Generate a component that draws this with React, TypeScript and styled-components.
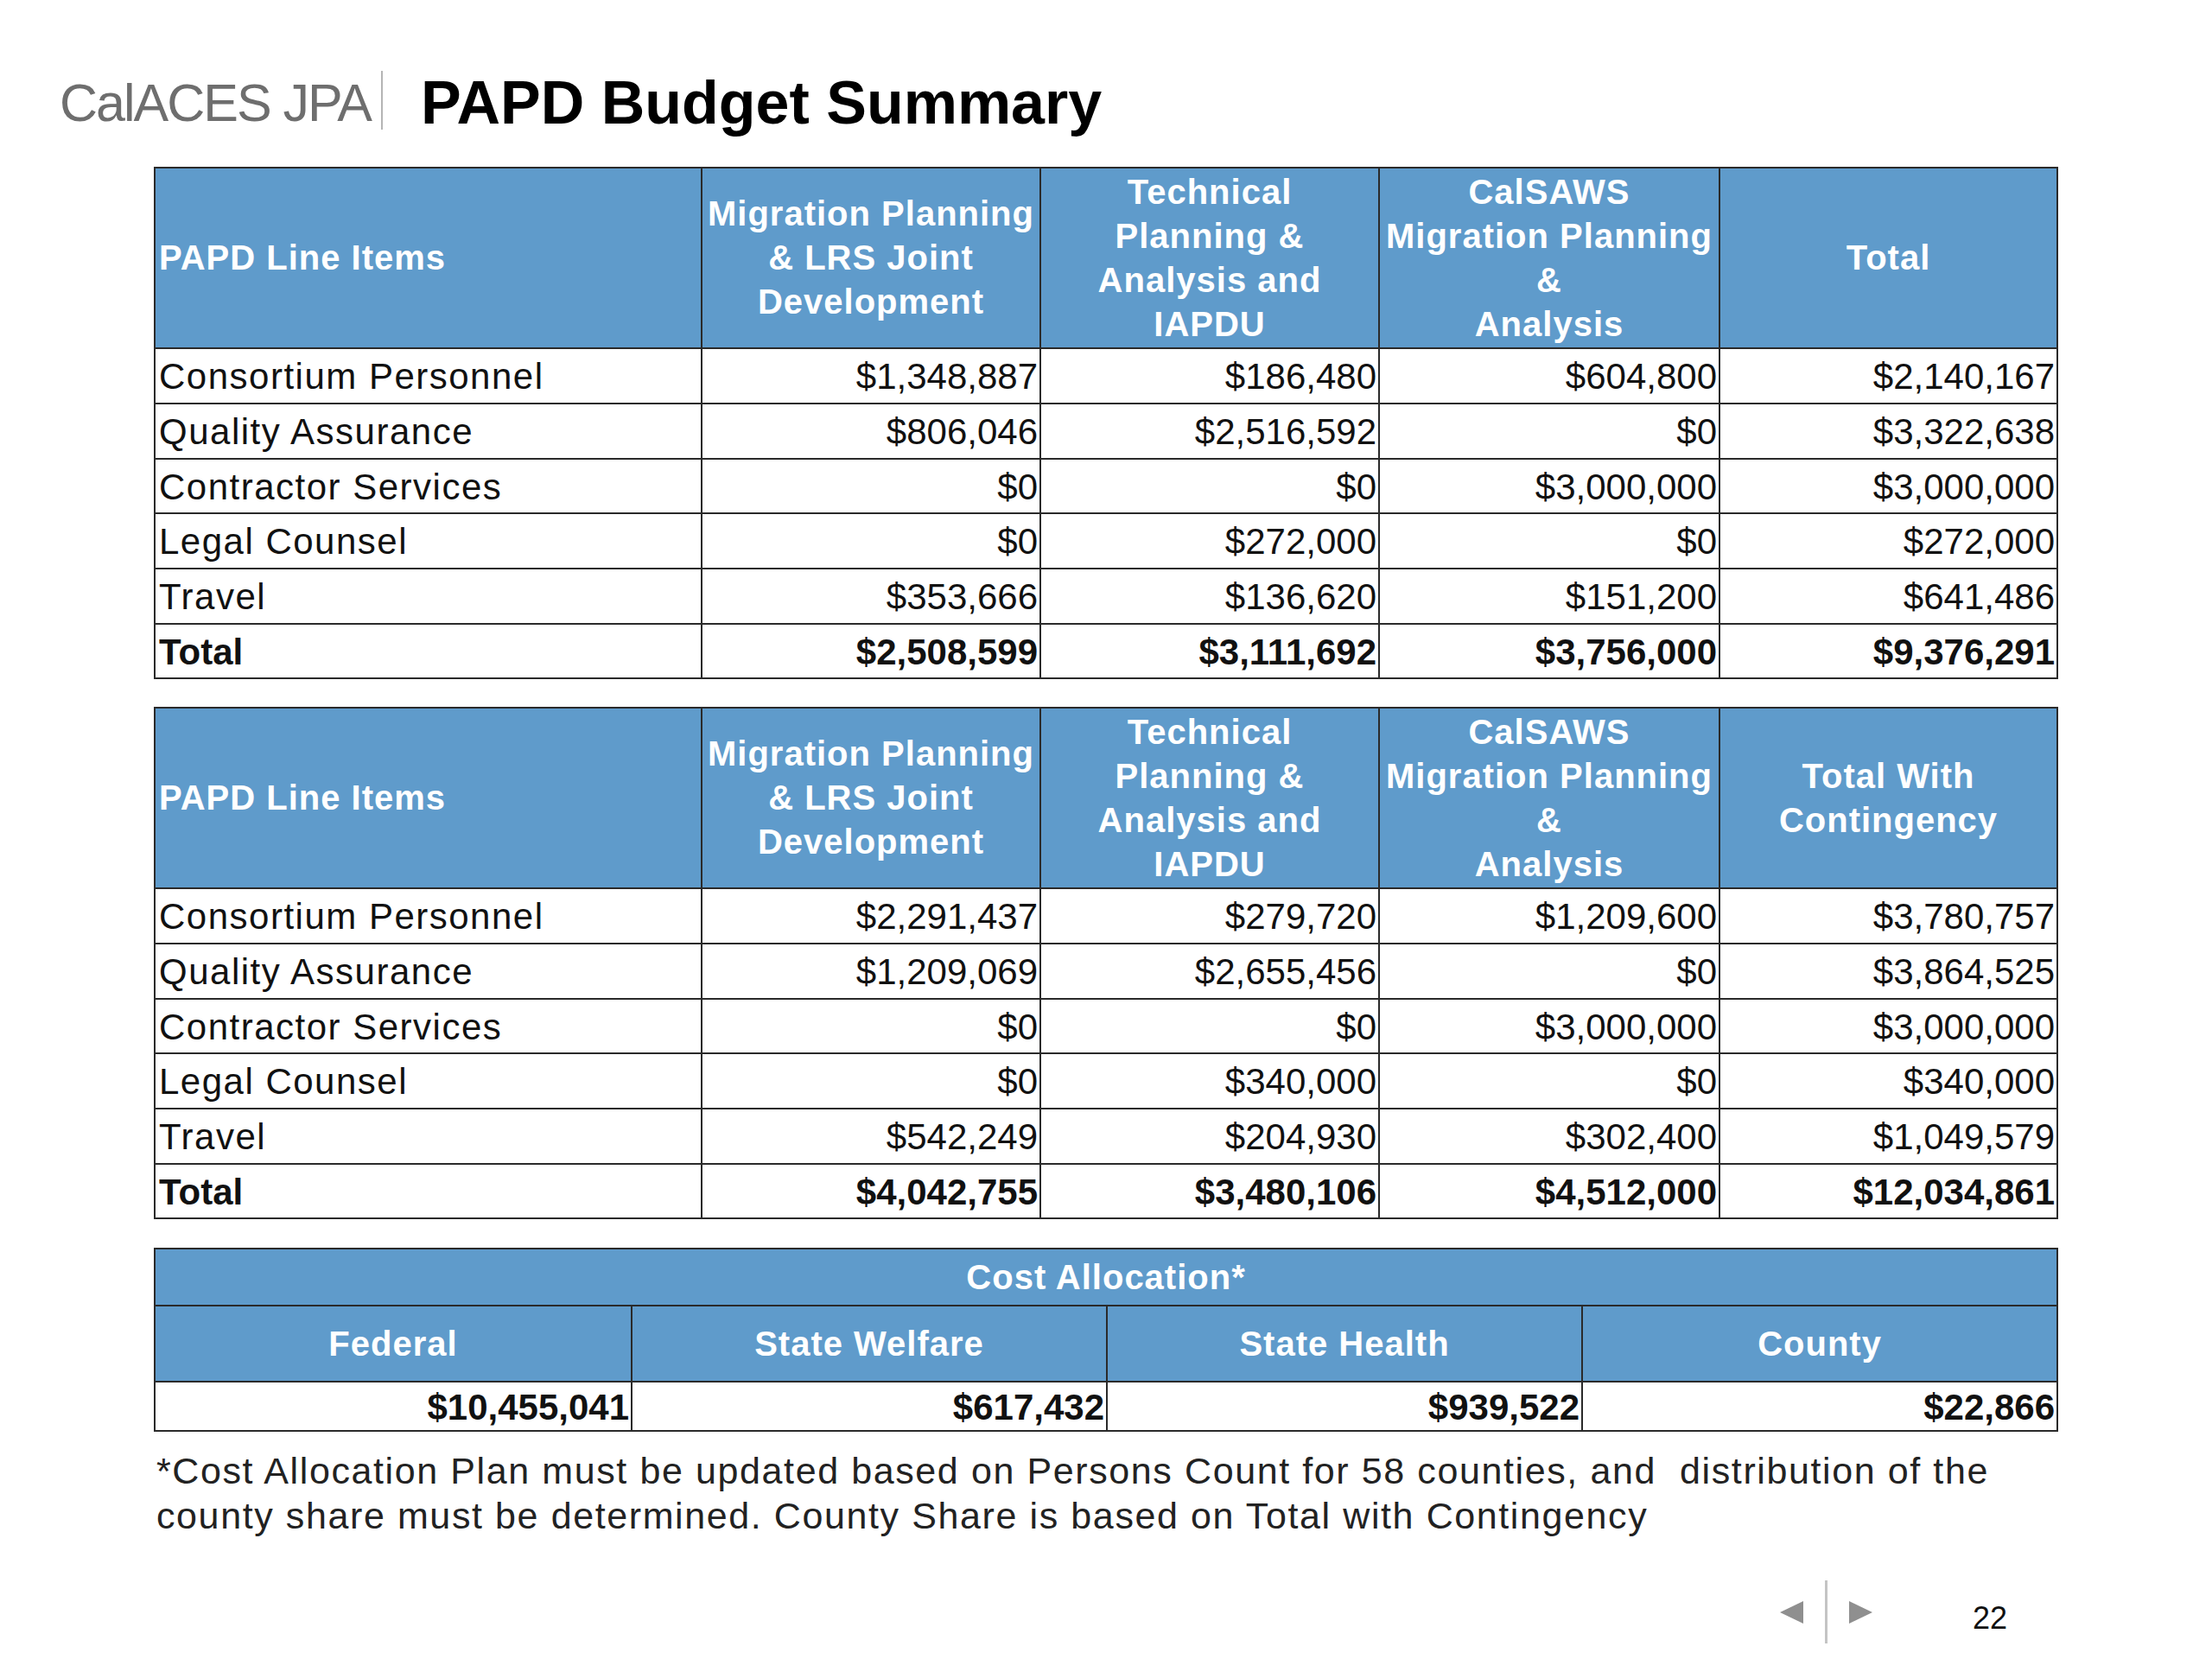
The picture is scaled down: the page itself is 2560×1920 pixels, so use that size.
import React from "react";
import styled, { createGlobalStyle } from "styled-components";

const GlobalStyle = createGlobalStyle`
  html, body { margin: 0; padding: 0; background: #fff; }
  body { font-family: "Liberation Sans", Arial, sans-serif; }
`;

const Slide = styled.div`
  width: 2560px;
  height: 1920px;
  box-sizing: border-box;
  display: flex;
  flex-direction: column;
  background: #fff;
  color: #111;
  font-family: "Liberation Sans", Arial, sans-serif;
  overflow: hidden;
`;

const TitleBar = styled.header`
  display: flex;
  align-items: center;
  height: 68px;
  margin-top: 85px;
  padding-left: 69px;
`;

const Brand = styled.span`
  font-size: 61px;
  letter-spacing: -2px;
  color: #6e6e6e;
  line-height: 1;
`;

const Divider = styled.span`
  width: 2px;
  align-self: stretch;
  background: #b5b5b5;
  margin: -3px 44px 3px 12px;
`;

const Title = styled.h1`
  margin: 0;
  font-size: 70px;
  font-weight: 700;
  color: #000;
  line-height: 1;
`;

const Body = styled.main`
  display: flex;
  flex-direction: column;
  padding-left: 178px;
  margin-top: 40px;
`;

const Grid = styled.table<{ $gap: number }>`
  width: 2202px;
  border-collapse: collapse;
  table-layout: fixed;
  margin-top: ${(p) => p.$gap}px;
`;

const HeadRow = styled.tr<{ $h: number }>`
  height: ${(p) => p.$h}px;
`;

const DataRow = styled.tr<{ $h: number }>`
  height: ${(p) => p.$h}px;
`;

const HeadCell = styled.th<{ $align?: "left" | "center" }>`
  background: #5f9bcb;
  color: #fff;
  font-weight: 700;
  font-size: 40px;
  letter-spacing: 1px;
  line-height: 51px;
  text-align: ${(p) => p.$align ?? "center"};
  vertical-align: middle;
  border: 2px solid #2a2a2a;
  padding: 0 4px;
  white-space: nowrap;
`;

const Cell = styled.td<{ $num?: boolean; $bold?: boolean }>`
  font-size: 42px;
  line-height: 1;
  color: #111;
  font-weight: ${(p) => (p.$bold ? 700 : 400)};
  letter-spacing: ${(p) => (p.$num || p.$bold ? 0 : 1.5)}px;
  text-align: ${(p) => (p.$num ? "right" : "left")};
  vertical-align: middle;
  border: 2px solid #2a2a2a;
  padding: 2px 2px 0 4px;
  white-space: nowrap;
`;

const Note = styled.p`
  margin: 19px 0 0 3px;
  font-size: 43px;
  letter-spacing: 1.6px;
  line-height: 52px;
  color: #222;
  white-space: pre-wrap;
`;

const Pager = styled.footer`
  margin-top: auto;
  margin-bottom: 18px;
  height: 73px;
  display: flex;
  align-items: center;
  justify-content: flex-end;
  padding-right: 237px;
`;

const Arrow = styled.svg`
  width: 28px;
  height: 28px;
  display: block;
`;

const PagerRule = styled.span`
  width: 3px;
  align-self: stretch;
  background: #c4c4c4;
  margin: 0 24px;
`;

const PageNo = styled.span`
  font-size: 36px;
  color: #111;
  margin-left: 116px;
  margin-top: 14px;
`;

type Row = { label: string; vals: string[]; total?: boolean };

const table1: Row[] = [
  { label: "Consortium Personnel", vals: ["$1,348,887", "$186,480", "$604,800", "$2,140,167"] },
  { label: "Quality Assurance", vals: ["$806,046", "$2,516,592", "$0", "$3,322,638"] },
  { label: "Contractor Services", vals: ["$0", "$0", "$3,000,000", "$3,000,000"] },
  { label: "Legal Counsel", vals: ["$0", "$272,000", "$0", "$272,000"] },
  { label: "Travel", vals: ["$353,666", "$136,620", "$151,200", "$641,486"] },
  { label: "Total", vals: ["$2,508,599", "$3,111,692", "$3,756,000", "$9,376,291"], total: true },
];

const table2: Row[] = [
  { label: "Consortium Personnel", vals: ["$2,291,437", "$279,720", "$1,209,600", "$3,780,757"] },
  { label: "Quality Assurance", vals: ["$1,209,069", "$2,655,456", "$0", "$3,864,525"] },
  { label: "Contractor Services", vals: ["$0", "$0", "$3,000,000", "$3,000,000"] },
  { label: "Legal Counsel", vals: ["$0", "$340,000", "$0", "$340,000"] },
  { label: "Travel", vals: ["$542,249", "$204,930", "$302,400", "$1,049,579"] },
  { label: "Total", vals: ["$4,042,755", "$3,480,106", "$4,512,000", "$12,034,861"], total: true },
];

const rowHeights = [64, 64, 63, 64, 64, 63];

const Lines = ({ lines }: { lines: string[] }) => (
  <>
    {lines.map((l, i) => (
      <React.Fragment key={i}>
        {i > 0 && <br />}
        {l}
      </React.Fragment>
    ))}
  </>
);

const BudgetTable = ({ rows, lastHead, gap }: { rows: Row[]; lastHead: string[]; gap: number }) => (
  <Grid $gap={gap}>
    <colgroup>
      <col style={{ width: 633 }} />
      <col style={{ width: 392 }} />
      <col style={{ width: 392 }} />
      <col style={{ width: 394 }} />
      <col style={{ width: 391 }} />
    </colgroup>
    <thead>
      <HeadRow $h={209}>
        <HeadCell $align="left">PAPD Line Items</HeadCell>
        <HeadCell>
          <Lines lines={["Migration Planning", "& LRS Joint", "Development"]} />
        </HeadCell>
        <HeadCell>
          <Lines lines={["Technical", "Planning &", "Analysis and", "IAPDU"]} />
        </HeadCell>
        <HeadCell>
          <Lines lines={["CalSAWS", "Migration Planning", "&", "Analysis"]} />
        </HeadCell>
        <HeadCell>
          <Lines lines={lastHead} />
        </HeadCell>
      </HeadRow>
    </thead>
    <tbody>
      {rows.map((r, i) => (
        <DataRow key={r.label} $h={rowHeights[i]}>
          <Cell $bold={r.total}>{r.label}</Cell>
          {r.vals.map((v, j) => (
            <Cell key={j} $num $bold={r.total}>
              {v}
            </Cell>
          ))}
        </DataRow>
      ))}
    </tbody>
  </Grid>
);

const allocation = [
  { head: "Federal", val: "$10,455,041" },
  { head: "State Welfare", val: "$617,432" },
  { head: "State Health", val: "$939,522" },
  { head: "County", val: "$22,866" },
];

export default function App() {
  return (
    <Slide>
      <GlobalStyle />
      <TitleBar>
        <Brand>CalACES JPA</Brand>
        <Divider />
        <Title>PAPD Budget Summary</Title>
      </TitleBar>
      <Body>
        <BudgetTable rows={table1} lastHead={["Total"]} gap={0} />
        <BudgetTable rows={table2} lastHead={["Total With", "Contingency"]} gap={32} />
        <Grid $gap={33}>
          <colgroup>
            <col style={{ width: 552 }} />
            <col style={{ width: 550 }} />
            <col style={{ width: 550 }} />
            <col style={{ width: 550 }} />
          </colgroup>
          <thead>
            <HeadRow $h={66}>
              <HeadCell colSpan={4}>Cost Allocation*</HeadCell>
            </HeadRow>
            <HeadRow $h={88}>
              {allocation.map((a) => (
                <HeadCell key={a.head}>{a.head}</HeadCell>
              ))}
            </HeadRow>
          </thead>
          <tbody>
            <DataRow $h={57}>
              {allocation.map((a) => (
                <Cell key={a.head} $num $bold>
                  {a.val}
                </Cell>
              ))}
            </DataRow>
          </tbody>
        </Grid>
        <Note>
          {"*Cost Allocation Plan must be updated based on Persons Count for 58 counties, and  distribution of the"}
          <br />
          {"county share must be determined. County Share is based on Total with Contingency"}
        </Note>
      </Body>
      <Pager>
        <Arrow viewBox="0 0 28 28" aria-label="previous">
          <polygon points="0,14 27,1 27,27" fill="#8f8f8f" />
        </Arrow>
        <PagerRule />
        <Arrow viewBox="0 0 28 28" aria-label="next">
          <polygon points="1,1 28,14 1,27" fill="#8f8f8f" />
        </Arrow>
        <PageNo>22</PageNo>
      </Pager>
    </Slide>
  );
}
